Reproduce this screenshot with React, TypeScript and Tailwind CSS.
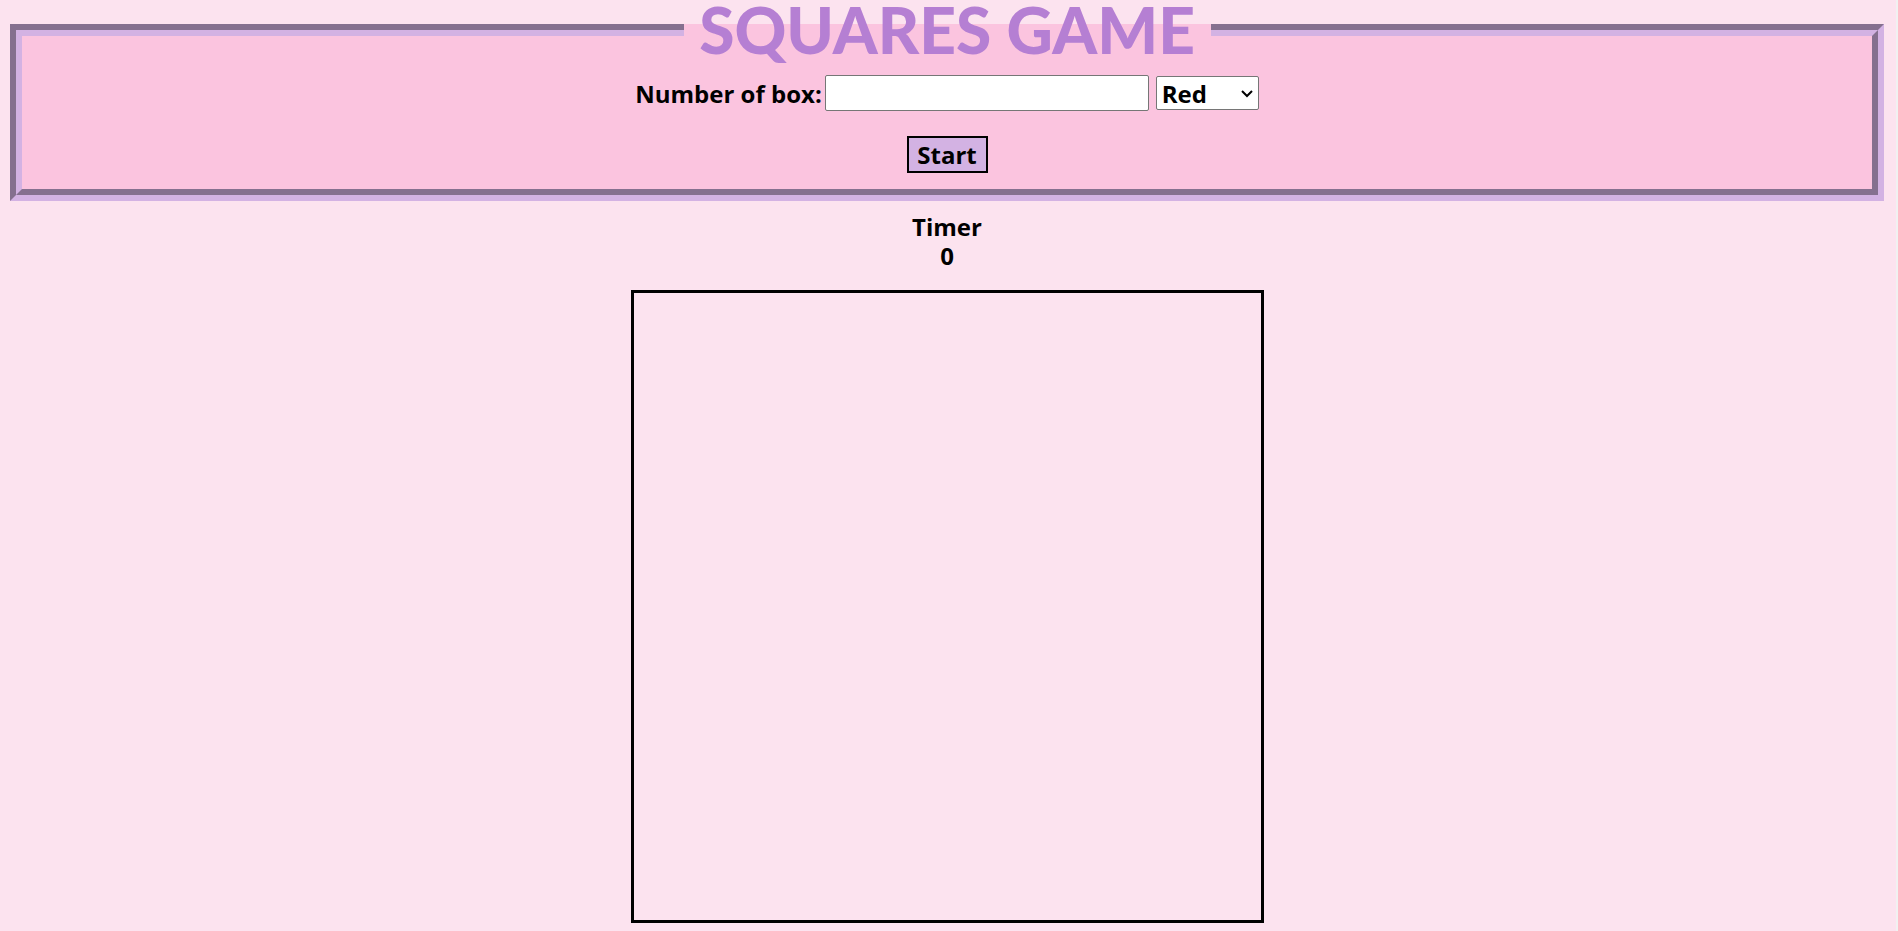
import { useEffect, useState } from "react";
import type { FormEvent } from "react";

const COLOURS = ["Red", "Orange", "Green", "Blue", "Purple"];

export default function App() {
  const [count, setCount] = useState("");
  const [colour, setColour] = useState("Red");
  const [running, setRunning] = useState(false);
  const [seconds, setSeconds] = useState(0);

  useEffect(() => {
    if (!running) return;
    const id = window.setInterval(() => setSeconds((s) => s + 1), 1000);
    return () => window.clearInterval(id);
  }, [running]);

  function start(event: FormEvent) {
    event.preventDefault();
    setSeconds(0);
    setRunning(true);
  }

  return (
    <main className="min-h-screen border-r-2 border-[#f1f1f1] bg-[#fce3ef] pr-3 pb-2 pl-[10px] font-['Open_Sans',sans-serif] text-[24px] leading-[29px] font-bold text-black">
      <form onSubmit={start}>
        <fieldset className="border-[12px] border-[#d3b2e3] bg-[#fbc4df] pt-[15px] pb-4 text-center [border-style:groove]">
          <legend className="mx-auto min-w-[527px] px-1 text-center font-['Lato',sans-serif] text-[64px] leading-[60px] font-black text-[#b57fd3]">
            SQUARES GAME
          </legend>
          <div className="flex items-center justify-center">
            <label htmlFor="count" className="mr-[3px]">
              Number of box:
            </label>
            <input
              id="count"
              type="text"
              value={count}
              onChange={(e) => setCount(e.target.value)}
              className="mr-[7px] h-9 w-[324px] rounded-[2px] border border-[#767676] bg-white px-1"
            />
            <div className="relative flex">
              <select
                aria-label="Colour"
                value={colour}
                onChange={(e) => setColour(e.target.value)}
                className="h-[34px] w-[103px] appearance-none rounded-[2px] border border-[#767676] bg-white pr-6 pl-[5px]"
              >
                {COLOURS.map((name) => (
                  <option key={name}>{name}</option>
                ))}
              </select>
              <svg
                aria-hidden="true"
                viewBox="0 0 12 8"
                className="pointer-events-none absolute top-[14px] right-[6px] h-2 w-3 fill-none stroke-black stroke-2"
              >
                <path d="M1 1l5 5 5-5" />
              </svg>
            </div>
          </div>
          <button
            type="submit"
            className="mx-auto mt-[25px] block h-[37px] w-[81px] border-2 border-black bg-[#d3b2e3]"
          >
            Start
          </button>
        </fieldset>
      </form>
      <div className="mt-[11px] text-center">
        <h2>Timer</h2>
        <p>{seconds}</p>
      </div>
      <div className="mx-auto mt-5 size-[633px] border-[3px] border-black" />
    </main>
  );
}
